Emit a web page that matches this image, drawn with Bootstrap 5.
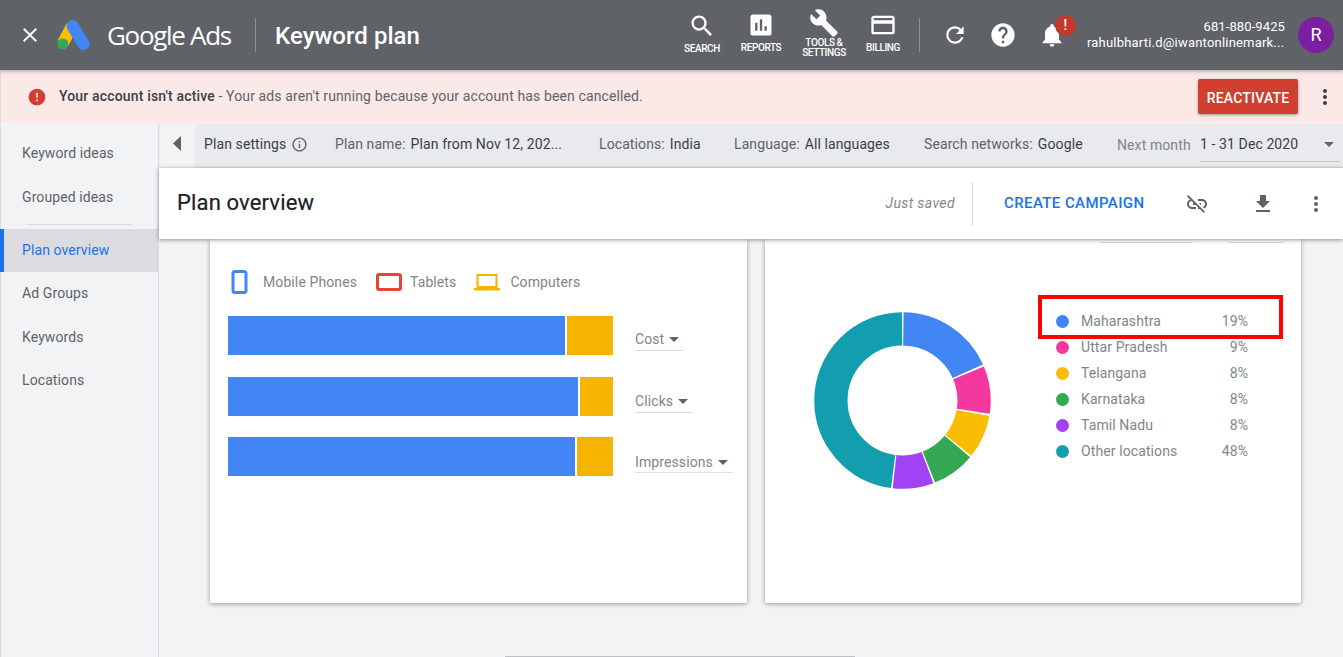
<!DOCTYPE html>
<html lang="en"><head><meta charset="utf-8"><title>Keyword plan</title>
<link rel="stylesheet" href="https://cdn.jsdelivr.net/npm/bootstrap@5.3.0/dist/css/bootstrap.min.css">
<style>
html,body{height:657px;overflow:hidden}
body{font-family:Roboto,"Liberation Sans",sans-serif;font-size:14px;letter-spacing:.1px;color:#5f6368;background:#f1f3f4}
svg{display:block;fill:currentColor;flex:none}
.topbar{height:70px;background:#5f6368;color:#fff;position:relative;z-index:3;box-shadow:0 1px 4px rgba(60,64,67,.45)}
.close-ic{margin-left:18px;margin-right:15px}
.logo-ic{margin-right:17px}
.brand{font-family:"Open Sans",Lato,sans-serif;font-size:26px;letter-spacing:-1.3px;width:148px;line-height:70px}
.v-div{width:1px;height:34px;background:#8d9094}
.page-name{font-size:24px;font-weight:500;letter-spacing:.05px;margin-left:19px;line-height:1;padding-top:2px}
.tile{height:70px;padding-top:12px;font-size:10px;font-weight:500;line-height:12px;letter-spacing:-.4px;text-align:center}
.tile svg{margin-bottom:3px}
.t-search{width:58px}.t-reports{width:60px;padding-top:11px}.t-tools{width:66px;padding-top:8px;line-height:10px}.t-billing{width:52px;padding-top:11px}
.t-tools svg{margin-bottom:0}
.act{margin-left:10px;margin-right:22px}
.act2{margin-right:21px}
.act3{margin-right:21px}
.bell-box{position:relative;width:30px;margin-right:19px}
.bell-badge{position:absolute;left:17px;top:-6px;width:21px;height:21px;border-radius:50%;background:#c5372c;font-size:14px;font-weight:500;line-height:21px;text-align:center}
.acct{width:198px;text-align:right;font-size:13px;line-height:16px;margin-right:13px}
.mail{margin-right:3px;letter-spacing:.2px}
.avatar{width:36px;height:36px;border-radius:50%;background:#7b1fa2;font-size:18px;line-height:36px;text-align:center;margin-right:9px}
.warn{height:53px;background:#fbe9e7;border-left:1px solid #dadce0;color:#5f6368;padding-left:26px;margin-bottom:1px;letter-spacing:.12px}
.warn b{font-weight:500;color:#3c4043;letter-spacing:.16px}
.warn-ic{color:#d23f31;margin-right:12px}
.react{background:#d23f31;color:#fff;font-size:14px;font-weight:500;letter-spacing:.2px;border:0;border-radius:2px;width:100px;height:35px;padding:3px 0 0;box-shadow:0 1px 3px rgba(60,64,67,.5);margin-right:15px}
.warn-more{color:#3c4043;margin-right:6px}
.body-row{height:533px}
.side{width:159px;background:#f1f3f4;border-right:1px solid #dadce0;border-left:1px solid #dadce0;flex:none;padding-top:8.4px}
.side-item{height:43.4px;line-height:43.4px;padding-left:21px;color:#5f6368}
.side-sep{height:1px;background:#dadce0;margin:5px 26px 3.8px 25px}
.side-item.on{background:#dadce0;color:#1a73e8;border-left:4px solid #1a73e8;padding-left:18px;margin-left:-1px}
.main{flex:1;min-width:0;position:relative}
.sbar{height:44px;background:#e8eaed;color:#5f6368;font-size:14px;border-bottom:1px solid #dadce0}
.back{width:37px;height:44px;background:#f1f3f4;border:1px solid #e8eaed;margin-right:8px;color:#5f6368;padding:0 0 4px 12px}
.sbar span.val{color:#3c4043;margin-left:1.5px}
.s1,.s2,.s3,.s4,.s5{margin-top:-3px}
.s1{width:131px;color:#3c4043}.s2{width:264px}.s3{width:135px}.s4{width:190px}.s5{width:193px}.s6{width:83px;color:#80868b}
.s7{width:140px;height:34px;border-bottom:1px solid #c4c7cc;color:#3c4043;margin-top:-1px;padding-right:6px}
.info-ic{margin-left:5px;color:#5f6368}
.caret-d{width:0;height:0;border-left:5px solid transparent;border-right:5px solid transparent;border-top:5px solid #5f6368;margin-left:5px;flex:none}
.phead{height:71px;background:#fff;position:relative;z-index:2;box-shadow:0 1px 4px rgba(60,64,67,.55);padding-left:18px}
.ptitle{font-size:22px;color:#202124;letter-spacing:.15px;-webkit-text-stroke:.2px #202124;padding-bottom:2px}
.saved{font-style:italic;color:#80868b;margin-left:auto;margin-right:17px;letter-spacing:.4px}
.ph-div{width:1px;height:44px;background:#dadce0;margin-right:31px}
.create{color:#1a73e8;font-size:15px;font-weight:500;letter-spacing:.4px;width:140px;margin-right:41px;white-space:nowrap}
.ph-ic1{margin-right:42px;color:#5f6368}
.ph-ic2{margin-right:29px;color:#5f6368}
.ph-ic3{margin-right:15px;color:#5f6368}
.cards{height:364px;padding-left:51px;gap:18px}
.pane{background:#fff;width:537px;border-radius:0 0 2px 2px;box-shadow:0 1px 4px rgba(60,64,67,.5);position:relative}
.pane-r{width:536px}
.legend-row{padding:9px 0 0 21px;height:77px}
.lg-lbl{color:#80868b;font-size:14px}
.gap-a{margin-right:15px}.gap-b{margin-right:19px}.gap-c{margin-right:8px}.gap-d{margin-right:18px}.gap-e{margin-right:10px}
.barline{padding-left:18px;height:39px;margin-bottom:22px}
.barline.b2{margin-bottom:21px}
.barline.b3{margin-bottom:0}
.track{width:385px;height:39px;gap:2px;flex:none}
.seg-b{background:#4285f4}.seg-y{background:#f4b400;flex:1}
.metric{margin-left:22px;height:25px;margin-top:10px;border-bottom:1px solid #dadce0;color:#80868b;align-self:flex-start;padding-top:3px}
.m-cost{width:49px}.m-clicks{width:58px;margin-top:11px}.m-imp{width:98px;margin-top:12px;height:24px}
.mini{position:absolute;top:3px;height:1px;background:#dadce0}
.m1{left:334px;width:94px}.m2{left:463px;width:56px}
.right-wrap{padding:73px 0 0 49px}
.locs{margin-left:52px;margin-top:-4px;width:205px}
.loc{height:26px;line-height:26px;padding-left:20px;position:relative;color:#80868b}
.pt{width:13px;height:13px;border-radius:50%;margin-right:12px;margin-left:-7px;flex:none}
.pct{margin-left:auto}
.redbox{position:absolute;left:273px;top:56px;width:245px;height:44px;border:4px solid #f00}
.donut circle{fill:none}
.c1{background:#4285f4}.c2{background:#f538a0}.c3{background:#fbbc04}.c4{background:#34a853}.c5{background:#a142f4}.c6{background:#129eaf}
.endline{width:350px;height:1px;background:#bdc1c6;margin:53px 0 0 346px}
</style></head><body>
<header class="topbar d-flex align-items-center">
<svg class="close-ic" width="24" height="24" viewBox="0 0 24 24"><path d="M19 6.41L17.59 5 12 10.59 6.41 5 5 6.41 10.59 12 5 17.59 6.41 19 12 13.41 17.59 19 19 17.59 13.41 12z"/></svg>
<svg class="logo-ic" width="33" height="30" viewBox="0 0 33 30"><path d="M15 6L6 23" stroke="#fbbc04" stroke-width="12" fill="none"/><path d="M15.500 6L26.500 24" stroke="#4285f4" stroke-width="12" stroke-linecap="round" fill="none"/><circle cx="5.800" cy="24" r="5.600" fill="#34a853"/></svg>
<div class="brand">Google Ads</div>
<div class="v-div"></div>
<div class="page-name">Keyword plan</div>
<div class="ms-auto d-flex align-items-center">
<div class="tile t-search d-flex flex-column align-items-center"><svg width="28" height="28" viewBox="0 0 24 24"><path d="M15.500 14h-.79l-.28-.27C15.410 12.590 16 11.110 16 9.500 16 5.910 13.090 3 9.500 3S3 5.910 3 9.500 5.910 16 9.500 16c1.610 0 3.090-.59 4.230-1.570l.27.28v.79l5 4.990L20.490 19l-4.990-5zm-6 0C7.010 14 5 11.990 5 9.500S7.010 5 9.500 5 14 7.010 14 9.500 11.990 14 9.500 14z"/></svg>SEARCH</div>
<div class="tile t-reports d-flex flex-column align-items-center"><svg width="28" height="28" viewBox="0 0 24 24"><path d="M19 3H5c-1.100 0-2 .9-2 2v14c0 1.100.9 2 2 2h14c1.100 0 2-.9 2-2V5c0-1.100-.9-2-2-2zM9 17H7v-7h2v7zm4 0h-2V7h2v10zm4 0h-2v-4h2v4z"/></svg>REPORTS</div>
<div class="tile t-tools d-flex flex-column align-items-center"><svg width="30" height="30" viewBox="0 0 24 24"><path d="M22.700 19l-9.100-9.100c.9-2.300.4-5-1.500-6.900-2-2-5-2.400-7.400-1.300L9 6 6 9 1.600 4.700C.4 7.100.9 10.100 2.900 12.100c1.900 1.900 4.600 2.400 6.900 1.500l9.100 9.100c.4.4 1 .4 1.400 0l2.300-2.300c.5-.4.5-1.100.1-1.400z"/></svg>TOOLS &amp;<br>SETTINGS</div>
<div class="tile t-billing d-flex flex-column align-items-center"><svg width="28" height="28" viewBox="0 0 24 24"><path d="M20 4H4c-1.110 0-1.990.89-1.990 2L2 18c0 1.110.89 2 2 2h16c1.110 0 2-.89 2-2V6c0-1.110-.89-2-2-2zm0 14H4v-7h16v7zm0-10H4V6h16v2z"/></svg>BILLING</div>
<div class="v-div act"></div>
<svg class="act2" width="26" height="26" viewBox="0 0 24 24"><path d="M17.650 6.350C16.200 4.900 14.210 4 12 4c-4.420 0-7.990 3.580-7.990 8s3.570 8 7.990 8c3.730 0 6.840-2.550 7.730-6h-2.080c-.82 2.330-3.040 4-5.650 4-3.310 0-6-2.690-6-6s2.690-6 6-6c1.660 0 3.140.69 4.220 1.780L13 11h7V4l-2.350 2.350z"/></svg>
<svg class="act3" width="28" height="28" viewBox="0 0 24 24"><path d="M12 2C6.480 2 2 6.480 2 12s4.480 10 10 10 10-4.480 10-10S17.520 2 12 2zm1 17h-2v-2h2v2zm2.070-7.750l-.9.92C13.450 12.900 13 13.500 13 15h-2v-.5c0-1.100.45-2.100 1.170-2.830l1.240-1.260c.37-.36.59-.86.59-1.410 0-1.100-.9-2-2-2s-2 .9-2 2H8c0-2.210 1.790-4 4-4s4 1.790 4 4c0 .88-.36 1.680-.93 2.250z"/></svg>
<div class="bell-box"><svg width="28" height="28" viewBox="0 0 24 24"><path d="M12 22c1.100 0 2-.9 2-2h-4c0 1.100.89 2 2 2zm6-6v-5c0-3.070-1.640-5.640-4.500-6.320V4c0-.83-.67-1.500-1.500-1.500s-1.500.67-1.500 1.500v.68C7.630 5.360 6 7.920 6 11v5l-2 2v1h16v-1l-2-2z"/></svg><span class="bell-badge">!</span></div>
<div class="acct"><div>681-880-9425</div><div class="mail">rahulbharti.d@iwantonlinemark...</div></div>
<div class="avatar">R</div>
</div>
</header>
<div class="warn d-flex align-items-center">
<svg class="warn-ic" width="20" height="20" viewBox="0 0 24 24"><path d="M12 2C6.480 2 2 6.480 2 12s4.480 10 10 10 10-4.480 10-10S17.520 2 12 2zm1 15h-2v-2h2v2zm0-4h-2V7h2v6z"/></svg>
<div><b>Your account isn't active</b> - Your ads aren't running because your account has been cancelled.</div>
<button class="btn react ms-auto" type="button">REACTIVATE</button>
<svg class="warn-more" width="24" height="24" viewBox="0 0 24 24"><path d="M12 8c1.100 0 2-.9 2-2s-.9-2-2-2-2 .9-2 2 .9 2 2 2zm0 2c-1.100 0-2 .9-2 2s.9 2 2 2 2-.9 2-2-.9-2-2-2zm0 6c-1.100 0-2 .9-2 2s.9 2 2 2 2-.9 2-2-.9-2-2-2z"/></svg>
</div>
<div class="body-row d-flex">
<nav class="side">
<div class="side-item">Keyword ideas</div>
<div class="side-item">Grouped ideas</div>
<div class="side-sep"></div>
<div class="side-item on">Plan overview</div>
<div class="side-item">Ad Groups</div>
<div class="side-item">Keywords</div>
<div class="side-item">Locations</div>
</nav>
<main class="main">
<div class="sbar d-flex align-items-center text-nowrap">
<div class="back d-flex align-items-center"><svg width="10" height="16" viewBox="0 0 10 16"><path d="M9 0v15L1 7.500z"/></svg></div>
<div class="s1 d-flex align-items-center">Plan settings<svg class="info-ic" width="17" height="17" viewBox="0 0 24 24"><path d="M11 17h2v-6h-2v6zm1-15C6.480 2 2 6.480 2 12s4.480 10 10 10 10-4.480 10-10S17.520 2 12 2zm0 18c-4.410 0-8-3.590-8-8s3.590-8 8-8 8 3.590 8 8-3.590 8-8 8zM11 9h2V7h-2v2z"/></svg></div>
<div class="s2">Plan name: <span class="val">Plan from Nov 12, 202...</span></div>
<div class="s3">Locations: <span class="val">India</span></div>
<div class="s4">Language: <span class="val">All languages</span></div>
<div class="s5">Search networks: <span class="val">Google</span></div>
<div class="s6">Next month</div>
<div class="s7 d-flex align-items-center justify-content-between">1 - 31 Dec 2020<span class="caret-d"></span></div>
</div>
<div class="phead d-flex align-items-center">
<div class="ptitle">Plan overview</div>
<div class="saved">Just saved</div>
<div class="ph-div"></div>
<div class="create">CREATE CAMPAIGN</div>
<svg class="ph-ic1" width="24" height="24" viewBox="0 0 24 24"><path d="M17 7h-4v1.900h4c1.710 0 3.100 1.390 3.100 3.100 0 1.430-.98 2.630-2.310 2.980l1.460 1.460C20.880 15.610 22 13.950 22 12c0-2.760-2.240-5-5-5zm-1 4h-2.190l2 2H16zM2 4.270l3.110 3.110C3.290 8.120 2 9.910 2 12c0 2.760 2.240 5 5 5h4v-1.900H7c-1.710 0-3.100-1.390-3.100-3.100 0-1.590 1.210-2.900 2.760-3.070L8.730 11H8v2h2.730L13 15.270V17h1.730l4.010 4L20 19.740 3.270 3 2 4.270z"/></svg>
<svg class="ph-ic2" width="24" height="24" viewBox="0 0 24 24"><path d="M19 9h-4V3H9v6H5l7 7 7-7zM5 18v2h14v-2H5z"/></svg>
<svg class="ph-ic3" width="24" height="24" viewBox="0 0 24 24"><path d="M12 8c1.100 0 2-.9 2-2s-.9-2-2-2-2 .9-2 2 .9 2 2 2zm0 2c-1.100 0-2 .9-2 2s.9 2 2 2 2-.9 2-2-.9-2-2-2zm0 6c-1.100 0-2 .9-2 2s.9 2 2 2 2-.9 2-2-.9-2-2-2z"/></svg>
</div>
<div class="cards d-flex">
<section class="pane">
<div class="legend-row d-flex align-items-center">
<svg width="17" height="24" viewBox="0 0 17 24" class="gap-a"><rect x="2" y="1.500" width="13" height="21" rx="2" fill="#fff" stroke="#4285f4" stroke-width="3"/></svg>
<span class="lg-lbl gap-b">Mobile Phones</span><svg width="26" height="18" viewBox="0 0 26 18" class="gap-c"><rect x="1.500" y="1.500" width="23" height="15" rx="1.500" fill="#fff" stroke="#ea4335" stroke-width="3"/></svg>
<span class="lg-lbl gap-d">Tablets</span><svg width="26" height="18" viewBox="0 0 26 18" class="gap-e"><path d="M3.500 2h19v12h-19z" fill="#fff" stroke="#f4b400" stroke-width="2"/><path d="M0 15h26v2.500H0z" fill="#f4b400"/></svg>
<span class="lg-lbl">Computers</span>
</div>
<div class="barline d-flex"><div class="track d-flex"><div class="seg-b" style="width:337px"></div><div class="seg-y"></div></div><div class="metric m-cost d-flex align-items-center">Cost<span class="caret-d"></span></div></div>
<div class="barline b2 d-flex"><div class="track d-flex"><div class="seg-b" style="width:350px"></div><div class="seg-y"></div></div><div class="metric m-clicks d-flex align-items-center">Clicks<span class="caret-d"></span></div></div>
<div class="barline b3 d-flex"><div class="track d-flex"><div class="seg-b" style="width:347px"></div><div class="seg-y"></div></div><div class="metric m-imp d-flex align-items-center">Impressions<span class="caret-d"></span></div></div>
</section>
<section class="pane pane-r d-flex align-items-start right-wrap">
<div class="mini m1"></div><div class="mini m2"></div>
<svg class="donut" width="177" height="177" viewBox="0 0 178 178" stroke-width="33.500">
<g transform="rotate(-90 89 89)">
<circle cx="89" cy="89" r="72" pathLength="100" stroke="#4285f4" stroke-dasharray="18.100 81.900" stroke-dashoffset="-.2"/>
<circle cx="89" cy="89" r="72" pathLength="100" stroke="#f538a0" stroke-dasharray="8.700 91.300" stroke-dashoffset="-18.700"/>
<circle cx="89" cy="89" r="72" pathLength="100" stroke="#fbbc04" stroke-dasharray="8 92" stroke-dashoffset="-27.800"/>
<circle cx="89" cy="89" r="72" pathLength="100" stroke="#34a853" stroke-dasharray="7.900 92.100" stroke-dashoffset="-36.100"/>
<circle cx="89" cy="89" r="72" pathLength="100" stroke="#a142f4" stroke-dasharray="7.500 92.500" stroke-dashoffset="-44.300"/>
<circle cx="89" cy="89" r="72" pathLength="100" stroke="#129eaf" stroke-dasharray="47.800 52.200" stroke-dashoffset="-52.100"/>
</g></svg>
<div class="locs">
<div class="loc d-flex align-items-center"><span class="pt c1"></span>Maharashtra<span class="pct">19%</span></div>
<div class="loc d-flex align-items-center"><span class="pt c2"></span>Uttar Pradesh<span class="pct">9%</span></div>
<div class="loc d-flex align-items-center"><span class="pt c3"></span>Telangana<span class="pct">8%</span></div>
<div class="loc d-flex align-items-center"><span class="pt c4"></span>Karnataka<span class="pct">8%</span></div>
<div class="loc d-flex align-items-center"><span class="pt c5"></span>Tamil Nadu<span class="pct">8%</span></div>
<div class="loc d-flex align-items-center"><span class="pt c6"></span>Other locations<span class="pct">48%</span></div>
</div>
<div class="redbox"></div>
</section>
</div>
<div class="endline"></div>
</main>
</div>
<script src="https://cdn.jsdelivr.net/npm/bootstrap@5.3.0/dist/js/bootstrap.bundle.min.js"></script>
</body></html>
